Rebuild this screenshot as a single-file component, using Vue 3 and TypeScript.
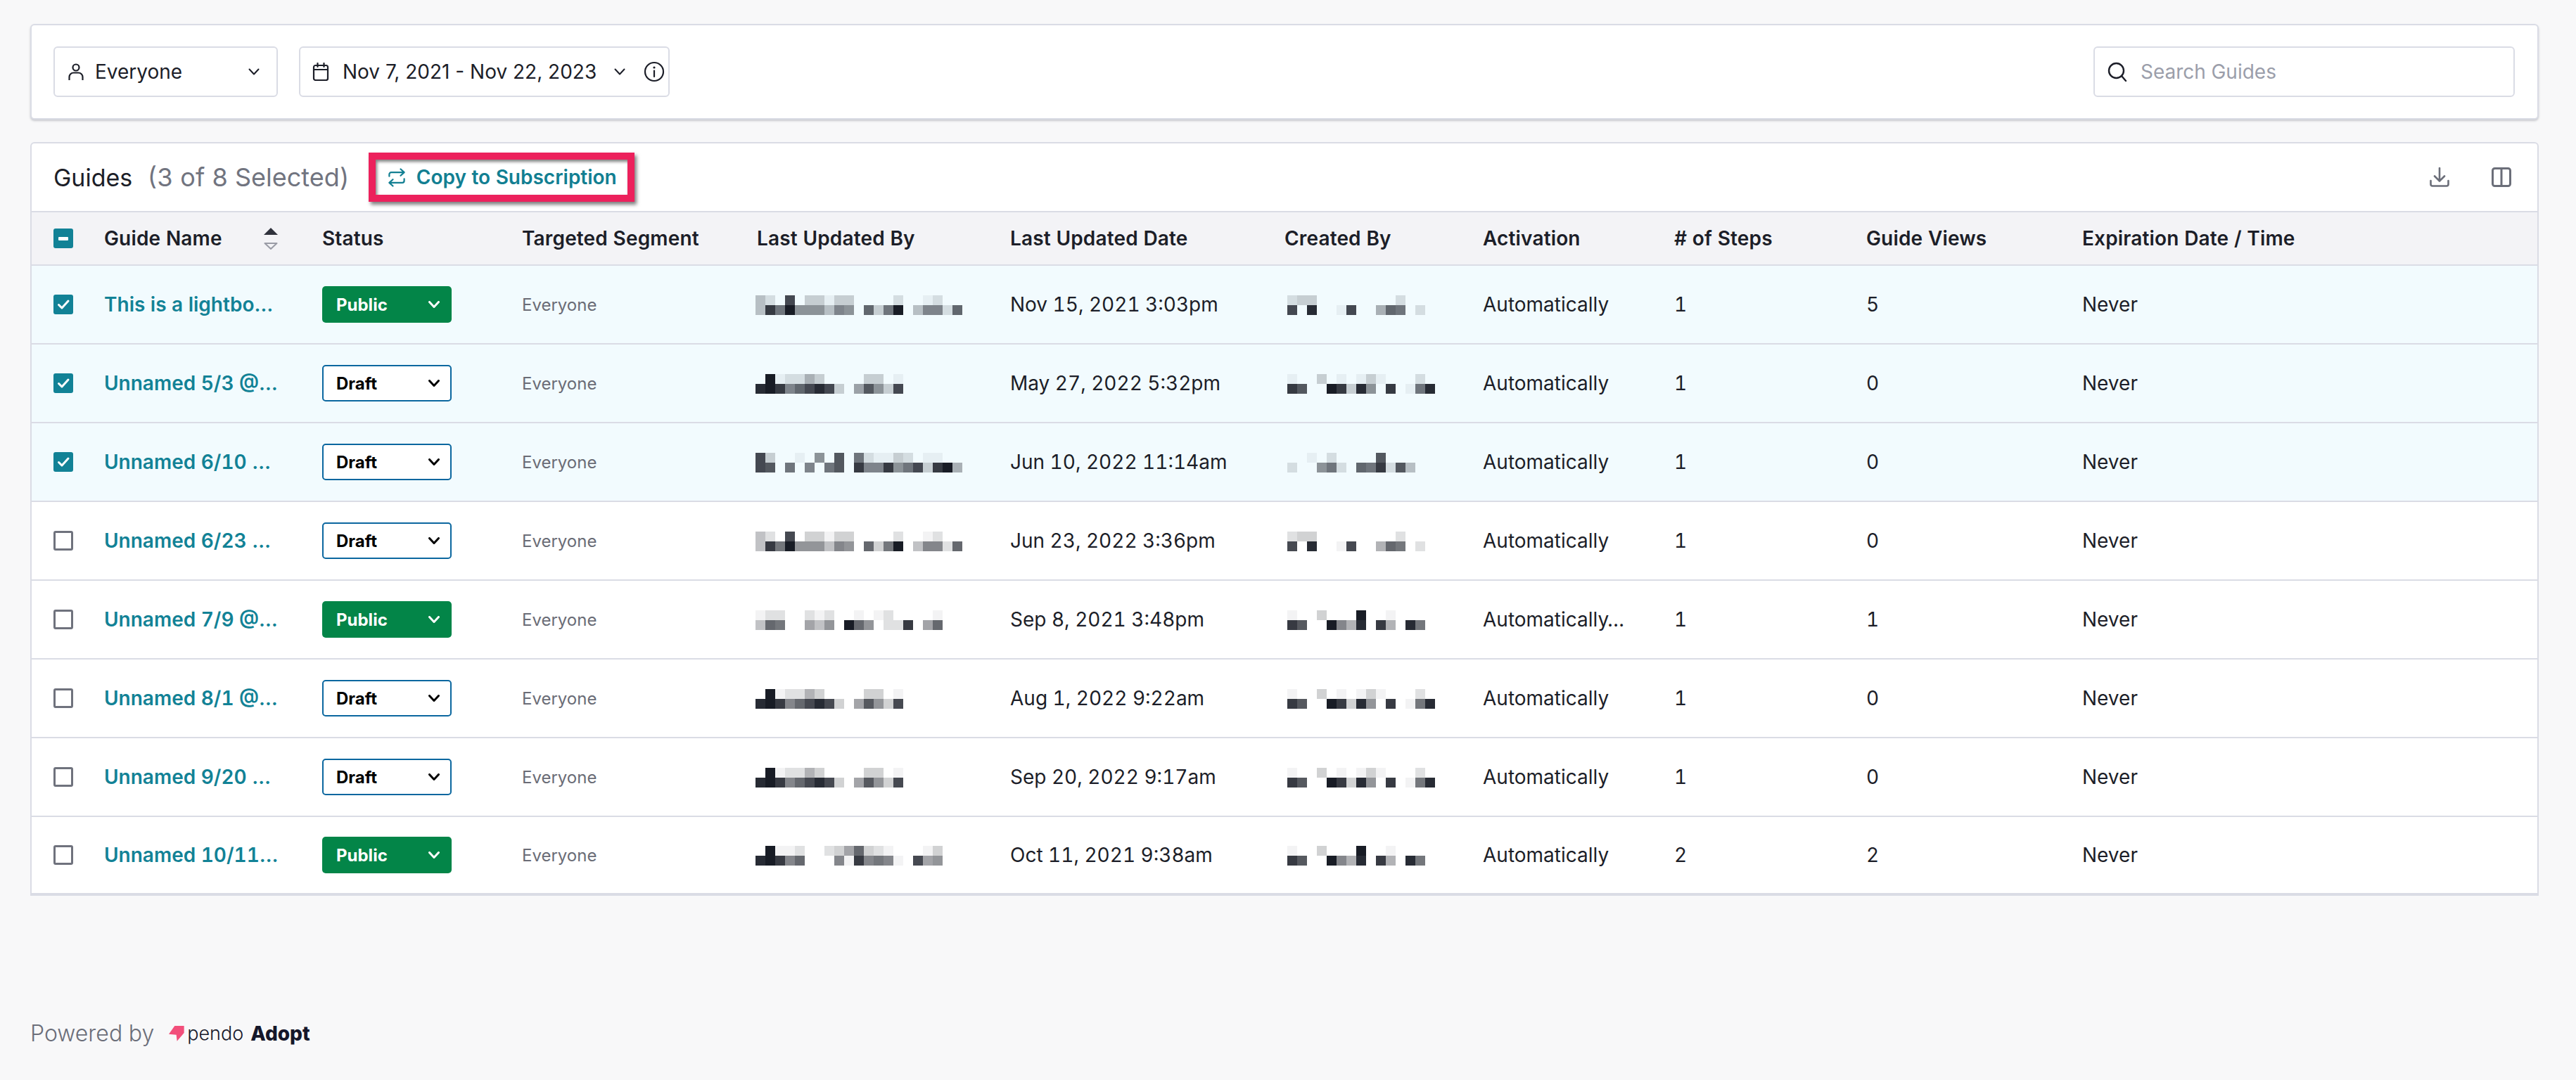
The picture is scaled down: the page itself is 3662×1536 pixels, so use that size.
<script setup lang="ts">
type Mosaic = { top: string; bottom: string }

const updatedBy: Record<string, Mosaic> = {
  A: { top: '420c03313300002001200', bottom: '4d9f7774870a39f04882a' },
  B: { top: '0f1225300003301', bottom: 'efd8acec306b73c' },
  C: { top: 'c3001070b092113201100', bottom: 'cb090809b0d88d79c3df5' },
  D: { top: '1220021200101200001', bottom: '4a9006470fa7022d06a' },
  E: { top: '0f11200236a32100013', bottom: 'efd8a00081d89810c67' },
}
const createdBy: Record<string, Mosaic> = {
  F: { top: '23300000000200', bottom: 'c0e001c005a902' },
  G: { top: '100301013100020', bottom: 'db00fd3e70d019e' },
  H: { top: '001020000b000', bottom: '2007920a9d2b4' },
  I: { top: '1003000f001000', bottom: 'db00f85e0d50e9' },
}

type Row = {
  name: string
  status: 'Public' | 'Draft'
  selected: boolean
  updatedBy: string
  date: string
  createdBy: string
  activation: string
  steps: number
  views: number
}

const rows: Row[] = [
  { name: 'This is a lightbo…', status: 'Public', selected: true, updatedBy: 'A', date: 'Nov 15, 2021 3:03pm', createdBy: 'F', activation: 'Automatically', steps: 1, views: 5 },
  { name: 'Unnamed 5/3 @…', status: 'Draft', selected: true, updatedBy: 'B', date: 'May 27, 2022 5:32pm', createdBy: 'G', activation: 'Automatically', steps: 1, views: 0 },
  { name: 'Unnamed 6/10 …', status: 'Draft', selected: true, updatedBy: 'C', date: 'Jun 10, 2022 11:14am', createdBy: 'H', activation: 'Automatically', steps: 1, views: 0 },
  { name: 'Unnamed 6/23 …', status: 'Draft', selected: false, updatedBy: 'A', date: 'Jun 23, 2022 3:36pm', createdBy: 'F', activation: 'Automatically', steps: 1, views: 0 },
  { name: 'Unnamed 7/9 @…', status: 'Public', selected: false, updatedBy: 'D', date: 'Sep 8, 2021 3:48pm', createdBy: 'I', activation: 'Automatically…', steps: 1, views: 1 },
  { name: 'Unnamed 8/1 @…', status: 'Draft', selected: false, updatedBy: 'B', date: 'Aug 1, 2022 9:22am', createdBy: 'G', activation: 'Automatically', steps: 1, views: 0 },
  { name: 'Unnamed 9/20 …', status: 'Draft', selected: false, updatedBy: 'B', date: 'Sep 20, 2022 9:17am', createdBy: 'G', activation: 'Automatically', steps: 1, views: 0 },
  { name: 'Unnamed 10/11…', status: 'Public', selected: false, updatedBy: 'E', date: 'Oct 11, 2021 9:38am', createdBy: 'I', activation: 'Automatically', steps: 2, views: 2 },
]

function alpha(c: string): number {
  const v = parseInt(c, 16)
  return v === 1 ? 0.05 : v / 15
}
function cellStyle(c: string) {
  return { backgroundColor: `rgba(24, 28, 37, ${alpha(c)})` }
}
</script>

<template>
  <div class="page">
    <section class="filters">
      <div class="field segment">
        <svg class="ic-person" viewBox="0 0 24 24"><circle cx="12" cy="6" r="4.500" /><path d="M2.500 23.500v-4a6 6 0 0 1 6-6h7a6 6 0 0 1 6 6v4" /></svg>
        <span class="field-text">Everyone</span>
        <svg class="chev" viewBox="0 0 16 10"><path d="M1.500 1.500 8 8.500l6.500-7" /></svg>
      </div>
      <div class="field range">
        <svg class="ic-cal" viewBox="0 0 24 26"><rect x="2" y="4" width="20" height="21" rx="2.500" /><path d="M2 10h20M7.500 1v5M16.500 1v5" /></svg>
        <span class="field-text">Nov 7, 2021 - Nov 22, 2023</span>
        <svg class="chev" viewBox="0 0 16 10"><path d="M1.500 1.500 8 8.500l6.500-7" /></svg>
        <svg class="ic-info" viewBox="0 0 30 30"><circle cx="15" cy="15" r="13" /><path d="M15 13.500V22" /><circle class="dot" cx="15" cy="9" r="1.600" /></svg>
      </div>
      <div class="field search">
        <svg class="ic-search" viewBox="0 0 28 28"><circle cx="12.500" cy="12.500" r="10.500" /><path d="m20 20 6 7" /></svg>
        <span class="placeholder">Search Guides</span>
      </div>
    </section>

    <section class="guides">
      <header class="toolbar">
        <h2 class="title">Guides</h2>
        <span class="count">(3 of 8 Selected)</span>
        <div class="callout">
          <svg class="ic-copy" viewBox="0 0 26 28"><path d="M1.500 12V9a3 3 0 0 1 3-3h20M19 1l5.500 5-5.500 5M24.500 16v3a3 3 0 0 1-3 3h-20M7 17l-5.500 5 5.500 5" /></svg>
          <span>Copy to Subscription</span>
        </div>
        <div class="toolbar-actions">
          <svg class="ic-dl" viewBox="0 0 28 28"><path d="M14 1v18M7 12.500l7 7 7-7M1.500 19v5a2.500 2.500 0 0 0 2.500 2.500h20a2.500 2.500 0 0 0 2.500-2.500v-5" /></svg>
          <svg class="ic-cols" viewBox="0 0 28 28"><rect x="1.500" y="1.500" width="25" height="25" rx="3" /><path d="M14 1.500v25" /></svg>
        </div>
      </header>

      <div class="row head">
        <div class="c-check"><span class="box on"><i class="minus" /></span></div>
        <div class="c-name name-head">
          <span>Guide Name</span>
          <span class="sort">
            <svg viewBox="0 0 20 10"><path class="up" d="M10 0 20 10H0z" /></svg>
            <svg viewBox="0 0 20 10"><path class="down" d="M1.500 1h17L10 9z" /></svg>
          </span>
        </div>
        <div class="c-status">Status</div>
        <div class="c-seg">Targeted Segment</div>
        <div class="c-upd upd-head">Last Updated By</div>
        <div class="c-date">Last Updated Date</div>
        <div class="c-crt">Created By</div>
        <div class="c-act">Activation</div>
        <div class="c-steps"># of Steps</div>
        <div class="c-views">Guide Views</div>
        <div class="c-exp">Expiration Date / Time</div>
      </div>

      <div v-for="r in rows" :key="r.date" class="row body" :class="{ selected: r.selected }">
        <div class="c-check">
          <span class="box" :class="{ on: r.selected }">
            <svg v-if="r.selected" viewBox="0 0 28 28"><path d="m7.500 14.500 4.500 4.500 9-10" /></svg>
          </span>
        </div>
        <div class="c-name link">{{ r.name }}</div>
        <div class="c-status">
          <span class="pill" :class="r.status === 'Public' ? 'public' : 'draft'">
            <span>{{ r.status }}</span>
            <svg viewBox="0 0 16 10"><path d="M1.500 1.500 8 8.500l6.500-7" /></svg>
          </span>
        </div>
        <div class="c-seg segment-text">Everyone</div>
        <div class="c-upd">
          <div class="mosaic">
            <div class="m-row"><i v-for="(c, i) in updatedBy[r.updatedBy].top" :key="i" :style="cellStyle(c)" /></div>
            <div class="m-row"><i v-for="(c, i) in updatedBy[r.updatedBy].bottom" :key="i" :style="cellStyle(c)" /></div>
          </div>
        </div>
        <div class="c-date">{{ r.date }}</div>
        <div class="c-crt crt-body">
          <div class="mosaic">
            <div class="m-row"><i v-for="(c, i) in createdBy[r.createdBy].top" :key="i" :style="cellStyle(c)" /></div>
            <div class="m-row"><i v-for="(c, i) in createdBy[r.createdBy].bottom" :key="i" :style="cellStyle(c)" /></div>
          </div>
        </div>
        <div class="c-act">{{ r.activation }}</div>
        <div class="c-steps">{{ r.steps }}</div>
        <div class="c-views">{{ r.views }}</div>
        <div class="c-exp">Never</div>
      </div>
    </section>

    <footer class="footer">
      <span class="powered">Powered by</span>
      <span class="logo">
        <svg viewBox="0 0 66 66"><path d="M25 0h40v30L35 65l-3-27L0 35z" /></svg>
        <span class="pendo">pendo</span>
        <span class="adopt">Adopt</span>
      </span>
    </footer>
  </div>
</template>

<style>
html, body {
  margin: 0;
  background: #f8f8f9;
}
</style>

<style scoped>
.page {
  box-sizing: border-box;
  width: 3662px;
  height: 1536px;
  overflow: hidden;
  padding: 34px 53px 0 43px;
  background: #f8f8f9;
  color: #1c1e28;
  font-family: Inter, "Liberation Sans", sans-serif;
  font-size: 28px;
  font-variant-numeric: tabular-nums;
}
svg {
  display: block;
  flex: none;
  fill: none;
  stroke: currentColor;
  stroke-linecap: round;
  stroke-linejoin: round;
}

/* filter bar */
.filters {
  box-sizing: border-box;
  height: 136px;
  display: flex;
  align-items: center;
  gap: 30px;
  padding: 0 32px 0 31px;
  background: #fff;
  border: 2px solid #dadce5;
  border-radius: 6px;
  box-shadow: 0 2px 3px rgba(60, 65, 80, 0.25);
}
.field {
  box-sizing: border-box;
  height: 72px;
  display: flex;
  align-items: center;
  background: #fff;
  border: 2px solid #dadce5;
  border-radius: 6px;
  white-space: nowrap;
}
.segment {
  width: 319px;
  padding-left: 18px;
}
.ic-person {
  width: 24px;
  height: 24px;
  stroke-width: 2.2;
  margin-right: 15px;
}
.chev {
  width: 16px;
  height: 10px;
  stroke-width: 2;
}
.segment .chev {
  margin-left: 94px;
}
.range {
  width: 527px;
  padding-left: 17px;
  font-variant-numeric: normal;
}
.ic-cal {
  width: 24px;
  height: 26px;
  stroke-width: 2.2;
  margin-right: 19px;
}
.range .chev {
  margin-left: 25px;
}
.ic-info {
  width: 30px;
  height: 30px;
  stroke-width: 2.2;
  margin-left: 26px;
}
.dot {
  fill: currentColor;
  stroke: none;
}
.search {
  width: 599px;
  margin-left: auto;
  padding-left: 18px;
}
.ic-search {
  width: 28px;
  height: 28px;
  stroke-width: 2.4;
  margin-right: 19px;
}
.placeholder {
  color: #9b9eaa;
}

/* guides card */
.guides {
  margin-top: 32px;
  background: #fff;
  border: 2px solid #dadce5;
  border-radius: 6px 6px 0 0;
}
.toolbar {
  box-sizing: border-box;
  height: 96px;
  display: flex;
  align-items: center;
  padding-left: 31px;
}
.title {
  margin: 0;
  font-size: 34px;
  font-weight: 400;
}
.count {
  margin-left: 21px;
  font-size: 36px;
  color: #71747f;
}
.callout {
  box-sizing: border-box;
  width: 378px;
  height: 70px;
  margin-left: 27px;
  display: flex;
  align-items: center;
  gap: 16px;
  padding-left: 18px;
  border: 10px solid #ec215c;
  color: #127f92;
  font-weight: 600;
  font-size: 28px;
  white-space: nowrap;
  box-shadow: 3px 4px 5px rgba(0, 0, 0, 0.5), inset 2px 3px 4px rgba(0, 0, 0, 0.5);
}
.ic-copy {
  width: 24px;
  height: 27px;
  stroke-width: 2.4;
}
.toolbar-actions {
  margin-left: auto;
  display: flex;
  gap: 60px;
  padding-right: 37px;
  color: #6b6e79;
}
.ic-dl {
  width: 28px;
  height: 28px;
  stroke-width: 2.6;
}
.ic-cols {
  width: 28px;
  height: 28px;
  stroke-width: 3;
}

/* table rows */
.row {
  box-sizing: border-box;
  display: flex;
  align-items: center;
  padding-left: 31px;
  white-space: nowrap;
}
.head {
  height: 78px;
  background: #f3f3f6;
  border-top: 2px solid #dadce5;
  border-bottom: 2px solid #dadce5;
  font-weight: 600;
  letter-spacing: 0.15px;
}
.upd-head {
  padding-left: 2px;
  box-sizing: border-box;
}
.body {
  height: 112px;
  border-bottom: 2px solid #dadce5;
}
.body:last-child {
  height: 110px;
}
.selected {
  background: #f2fbfe;
}
.c-check { width: 72px; }
.c-name { width: 310px; }
.c-status { width: 284px; }
.c-seg { width: 332px; }
.c-upd { width: 362px; }
.c-date { width: 390px; }
.c-crt { width: 282px; }
.crt-body {
  padding-left: 4px;
  box-sizing: border-box;
}
.c-act { width: 272px; }
.c-steps { width: 273px; }
.c-views { width: 307px; }
.c-exp { flex: 1; }

.box {
  box-sizing: border-box;
  display: flex;
  align-items: center;
  justify-content: center;
  width: 28px;
  height: 28px;
  border: 3px solid #6f727d;
  border-radius: 3px;
  background: #fff;
}
.box.on {
  background: #128296;
  border: none;
}
.box svg {
  width: 28px;
  height: 28px;
  color: #fff;
  stroke-width: 3;
}
.minus {
  display: block;
  width: 14px;
  height: 5px;
  border-radius: 1px;
  background: #fff;
}
.name-head {
  display: flex;
  align-items: center;
}
.sort {
  display: flex;
  flex-direction: column;
  gap: 11px;
  margin-left: 59px;
}
.sort svg {
  width: 20px;
  height: 10px;
  stroke: none;
}
.up {
  fill: #30323c;
}
.down {
  fill: none;
  stroke: #9a9ca6;
  stroke-width: 2;
}
.link {
  color: #128296;
  font-weight: 600;
}
.pill {
  box-sizing: border-box;
  width: 184px;
  height: 52px;
  display: flex;
  align-items: center;
  justify-content: space-between;
  padding: 0 17px 0 20px;
  border-radius: 5px;
  font-size: 24px;
  font-weight: 700;
}
.pill svg {
  width: 16px;
  height: 10px;
  stroke-width: 3;
}
.public {
  background: #038548;
  color: #fff;
}
.draft {
  background: #fff;
  border: 2px solid #0b679f;
  color: #000;
  padding: 0 15px 0 18px;
}
.segment-text {
  color: #6a6c76;
  font-size: 24px;
}
.mosaic {
  display: flex;
  flex-direction: column;
  margin-top: 2px;
}
.m-row {
  display: flex;
}
.m-row i {
  display: block;
  width: 14px;
  height: 14px;
}

/* footer */
.footer {
  margin-top: 176px;
  display: flex;
  align-items: center;
  color: #6b6e79;
}
.powered {
  font-size: 32px;
  font-weight: 300;
}
.logo {
  margin-left: 21px;
  display: flex;
  align-items: center;
  color: #15172a;
}
.logo svg {
  width: 22px;
  height: 22px;
  stroke: none;
  fill: #f24f7b;
}
.pendo {
  margin-left: 4px;
  font-size: 27px;
  font-weight: 300;
}
.adopt {
  margin-left: 10px;
  font-size: 28px;
  font-weight: 800;
}
</style>
